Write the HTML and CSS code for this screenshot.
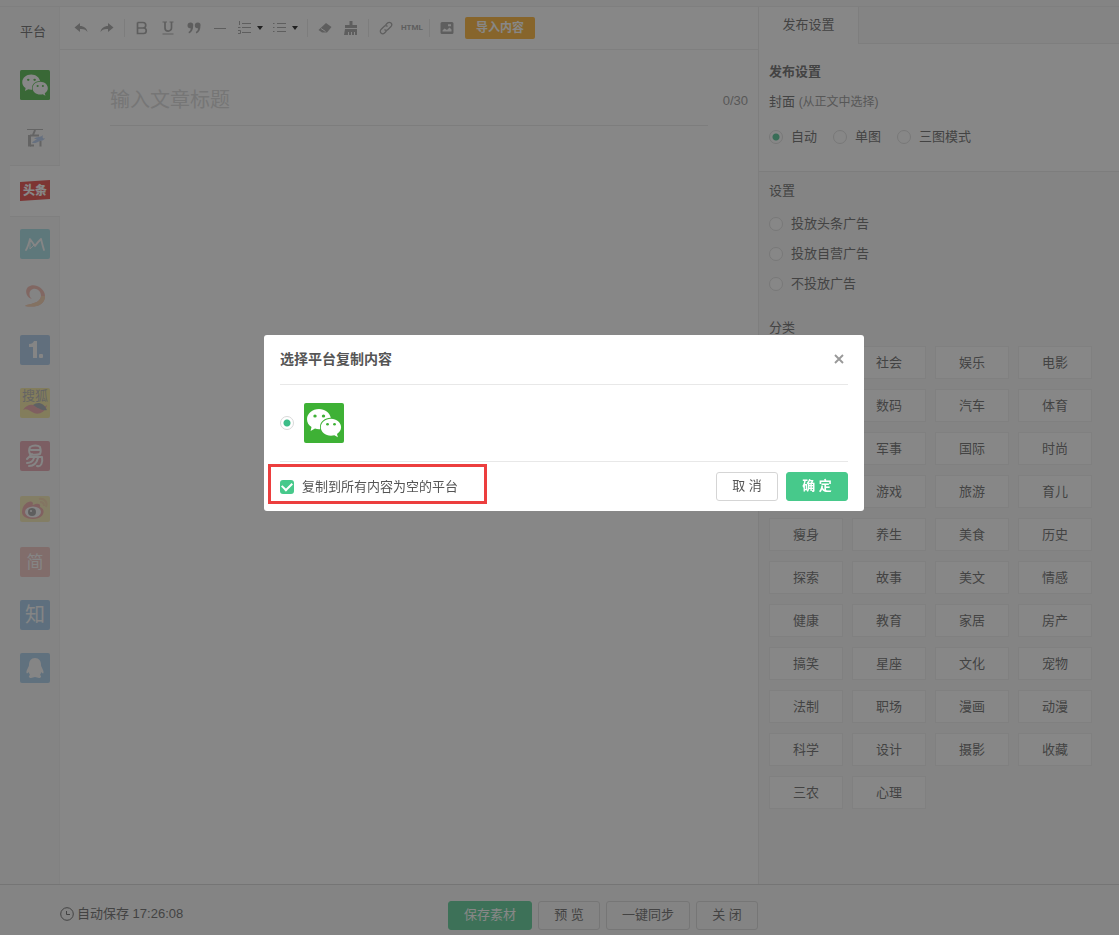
FILE: index.html
```html
<!DOCTYPE html>
<html lang="zh-CN">
<head>
<meta charset="utf-8">
<title>发布设置</title>
<link rel="stylesheet" href="styles.css">
</head>
<body>
<svg class="defs" width="0" height="0" aria-hidden="true">
  <symbol id="wechat" viewBox="0 0 40 40">
    <rect width="40" height="40" rx="2" fill="#3eb135"/>
    <path fill="#fff" d="M15 6C8.400 6 3 10.500 3 16.200c0 3.200 1.700 6 4.500 7.900L6.600 28l4.400-2.400c1.300.4 2.600.6 4 .6h1.200A9.500 9.500 0 0 1 16 24c0-5.200 4.900-9.300 10.800-9.200C25.800 9.800 20.900 6 15 6z"/>
    <path fill="#fff" d="M27 15.800c-5.700 0-10.200 3.800-10.200 8.500s4.500 8.500 10.200 8.500c1.200 0 2.400-.2 3.400-.5l3.500 1.900-.9-3.200c2.500-1.600 4.100-4 4.100-6.700 0-4.700-4.500-8.500-10.100-8.500z"/>
    <g fill="#3eb135"><ellipse cx="11" cy="13" rx="1.700" ry="1.500"/><ellipse cx="19.500" cy="13" rx="1.700" ry="1.500"/><ellipse cx="23.500" cy="21.300" rx="1.400" ry="1.200"/><ellipse cx="30.500" cy="21.300" rx="1.400" ry="1.200"/></g>
  </symbol>
</svg>

<div class="app">
  <div class="workspace">
    <nav class="platforms" aria-label="平台">
      <div class="platforms-title">平台</div>
      <button class="platform full" aria-label="微信"><svg viewBox="0 0 40 40"><use href="#wechat"/></svg></button>
      <button class="platform" aria-label="百家号"><svg viewBox="0 0 30 30"><path d="M7 6.500h16" stroke="#333"/><path d="M15 7l-2 5" stroke="#333" stroke-width="2"/><path d="M9.500 23.500V12" stroke="#333" stroke-width="3"/><path d="M10 12.500h9M10 22.500h4M20.500 18v5.500" fill="none" stroke="#333" stroke-width="2"/><path d="M12 20c2-3 3-2 5-4h-3c3-3 6-1 9-4-1 3 0 4 2 3-2 4-5 2-7 4-2 1-3 1-6 1z" fill="#3f7fe0"/></svg></button>
      <button class="platform active full" aria-label="头条"><svg viewBox="0 0 30 30"><path d="M0 6l30-2v19L0 25z" fill="#e5322f"/><text x="15" y="19" font-size="12" font-weight="900" text-anchor="middle" fill="#fff">头条</text></svg></button>
      <button class="platform" aria-label="美拍"><svg viewBox="0 0 30 30"><rect width="30" height="30" rx="2" fill="#12adc4"/><path d="M6 21c2-3 3-7 4-11l5 7c2-3 4-5 6-7 1 4 2 8 3 11" fill="none" stroke="#fff" stroke-width="1.800" stroke-linejoin="round" stroke-linecap="round"/><path d="M10 11v9l4-4" fill="none" stroke="#fff"/></svg></button>
      <button class="platform" aria-label="大鱼号"><svg viewBox="0 0 30 30"><path d="M8 5c3-2 6-2 9-1 5 2 8 6 8 10 0 9-9 12-20 10 2-2 5-1 9-3 4-1 7-4 7-7 0-5-4-8-8-7-4 1-5 7-1 10-5-1-8-8-4-12z" fill="#e8482a"/><path d="M5 24c2-2 5-1 9-3 4-1 7-4 7-7h4c0 9-9 12-20 10z" fill="#f28a2b"/></svg></button>
      <button class="platform" aria-label="一点号"><svg viewBox="0 0 30 30"><rect width="30" height="30" rx="2" fill="#2078cc"/><path fill="#fff" d="M9 9c3 0 4-1 5-3h3v17h-4V12H9z"/><rect x="19" y="19" width="4" height="4" rx="1" fill="#fff"/></svg></button>
      <button class="platform" aria-label="搜狐"><svg viewBox="0 0 30 30"><rect width="30" height="30" rx="2" fill="#f2cc00"/><text x="15" y="12" font-size="13" text-anchor="middle" fill="#333">搜狐</text><path d="M3 22c4-6 9-6 13-4s8 2 11-1c-2 8-9 10-13 8s-8-5-11-3z" fill="#d9161a"/><path d="M13 17c5-4 11-2 14 5-4 1-8-1-14-5z" fill="#123"/></svg></button>
      <button class="platform" aria-label="网易"><svg viewBox="0 0 30 30"><rect width="30" height="30" rx="2" fill="#c6102c"/><path d="M10 6c3-2 8-2 10 0 1 3 1 5 0 7-3 1-7 1-10 0-1-2-1-5 0-7zM11 9h8M12 13l-5 5M9 16h13c1 6-1 10-5 9M14 17c-1 3-4 5-7 5M18 17c-1 4-4 8-9 8" fill="none" stroke="#fff" stroke-width="2" stroke-linejoin="round" stroke-linecap="round"/></svg></button>
      <button class="platform" aria-label="微博"><svg viewBox="0 0 30 30"><rect y="2" width="30" height="26" rx="2" fill="#f6d23a"/><path d="M2 18C2 11 9 6 12 8c2 1 0 3 1 3 4-2 8-2 7 2 6 2 5 12-7 12-7 0-11-3-11-7z" fill="#e0201c"/><ellipse cx="13" cy="18" rx="8" ry="5.500" fill="#fff"/><circle cx="12" cy="18" r="4" fill="#111"/><circle cx="11" cy="17" r="1" fill="#fff"/><path d="M19 5c5-1 9 3 7 8M20 8c3 0 4 2 4 4" fill="none" stroke="#f29b27" stroke-width="2"/></svg></button>
      <button class="platform" aria-label="简书"><svg viewBox="0 0 30 30"><rect width="30" height="30" rx="2" fill="#e5685f"/><text x="15" y="21" font-size="17" text-anchor="middle" fill="#fff">简</text></svg></button>
      <button class="platform" aria-label="知乎"><svg viewBox="0 0 30 30"><rect width="30" height="30" rx="2" fill="#0f78d4"/><text x="15" y="22" font-size="20" text-anchor="middle" fill="#fff">知</text></svg></button>
      <button class="platform" aria-label="QQ"><svg viewBox="0 0 30 30"><rect width="30" height="30" rx="2" fill="#1a82d6"/><path d="M15 5c-4 0-6 3-6 7 0 2-3 5-2.500 8 .5 1 1.500 0 2-1l1.500 3c-2 1-1 3 1 3l4-1 4 1c2 0 3-2 1-3l1.500-3c.5 1 1.500 2 2 1C24 17 21 14 21 12c0-4-2-7-6-7z" fill="#fff"/></svg></button>
    </nav>

    <main class="editor">
      <div class="toolbar" role="toolbar">
        <button class="tool" aria-label="撤销"><svg viewBox="0 0 14 14"><path d="M6 2L.5 6.500 6 11V8c4-.3 6 1 7.500 3C13 7.500 10 5 6 5z" fill="currentColor"/></svg></button>
        <button class="tool" aria-label="重做"><svg viewBox="0 0 14 14"><path d="M8 2l5.500 4.500L8 11V8C4 7.700 2 9 .5 11 1 7.500 4 5 8 5z" fill="currentColor"/></svg></button>
        <span class="divider"></span>
        <button class="tool" aria-label="加粗"><svg viewBox="0 0 14 14"><path d="M2.500 1.500v11h6a2.700 2.700 0 0 0 0-5.500h-6M2.500 1.500h5.500a2.700 2.700 0 0 1 0 5.500" fill="none" stroke="currentColor" stroke-width="1.700"/></svg></button>
        <button class="tool" aria-label="下划线"><svg viewBox="0 0 14 14"><path d="M1.500 1h4.500M8.500 1h4" stroke="currentColor"/><path d="M4 1v6a3.200 3 0 0 0 6.500 0V1" fill="none" stroke="currentColor" stroke-width="1.700"/><path d="M1.500 13h11" stroke="currentColor"/></svg></button>
        <button class="tool" aria-label="引用"><svg viewBox="0 0 14 14"><path d="M3.500 1.500a2.500 2.500 0 0 1 2.700 3C6.200 8.500 5 11 2 12.500L1.500 11C3 10 3.700 9 3.700 7.200A2.800 2.800 0 0 1 .5 4.500a3 3 0 0 1 3-3zM10.800 1.500a2.500 2.500 0 0 1 2.700 3c0 4-1.200 6.500-4.200 8L8.800 11c1.500-1 2.200-2 2.200-3.800a2.800 2.800 0 0 1-3.200-2.700 3 3 0 0 1 3-3z" fill="currentColor"/></svg></button>
        <button class="tool" aria-label="分割线"><svg viewBox="0 0 14 14"><path d="M1 7.500h12" stroke="currentColor"/></svg></button>
        <button class="tool menu" aria-label="有序列表"><svg viewBox="0 0 14 14"><path d="M4 2.500h9M4 6.500h9M4 11.500h9M1.500 0v4M0 6.500h2.500M0 9.500h2.500v3H0" fill="none" stroke="currentColor"/></svg><i class="caret"></i></button>
        <button class="tool menu" aria-label="无序列表"><svg viewBox="0 0 14 14"><path d="M4 2.500h9M4 6.500h9M4 10.500h9M0 2.500h1.500M0 6.500h1.500M0 10.500h1.500" stroke="currentColor"/></svg><i class="caret"></i></button>
        <span class="divider"></span>
        <button class="tool" aria-label="清除格式"><svg viewBox="0 0 14 14"><path d="M8 2l5.500 4-4.500 5.500H4L.5 9z" fill="currentColor"/><path d="M3 7.500l4.500 3" stroke="#fff"/></svg></button>
        <button class="tool" aria-label="格式刷"><svg viewBox="0 0 14 14"><path d="M5.500 0h3v4H13v3H1V4h4.500zM1 8h12v6h-2v-3h-1v3H8v-3H7v3H5v-3H4v3H0z" fill="currentColor"/></svg></button>
        <span class="divider"></span>
        <button class="tool" aria-label="链接"><svg viewBox="0 0 14 14"><path d="M6.500 4l2-2a2.300 2.300 0 0 1 3.500 3.500l-3 3a2.300 2.300 0 0 1-3.500 0M7.500 10l-2 2A2.300 2.300 0 0 1 2 8.500l3-3a2.300 2.300 0 0 1 3.500 0" fill="none" stroke="currentColor" stroke-width="1.200"/></svg></button>
        <button class="tool html">HTML</button>
        <span class="divider"></span>
        <button class="tool" aria-label="图片"><svg viewBox="0 0 14 14"><path fill="currentColor" fill-rule="evenodd" d="M2 1h10q1.500 0 1.500 1.500v9q0 1.500-1.500 1.500H2q-1.500 0-1.500-1.500v-9Q.5 1 2 1zM2.500 10.500h9V8.500L9.500 6.500 7 9 4.500 7.500l-2 2zM8 3.200v2h3v-2z"/></svg></button>
        <button class="import">导入内容</button>
      </div>
      <div class="title-row">
        <input class="title-input" type="text" placeholder="输入文章标题" aria-label="文章标题">
        <span class="counter">0/30</span>
      </div>
    </main>

    <aside class="settings">
      <div class="tabs"><button class="tab">发布设置</button></div>
      <section class="cover">
        <h2>发布设置</h2>
        <p>封面 <small>(从正文中选择)</small></p>
        <div class="radio-row">
          <label><input type="radio" name="cover" checked>自动</label>
          <label><input type="radio" name="cover">单图</label>
          <label><input type="radio" name="cover">三图模式</label>
        </div>
      </section>
      <section class="options">
        <h3>设置</h3>
        <div class="radio-list">
          <label><input type="radio" name="ad">投放头条广告</label>
          <label><input type="radio" name="ad">投放自营广告</label>
          <label><input type="radio" name="ad">不投放广告</label>
        </div>
        <h3>分类</h3>
        <div class="categories">
          <button class="second">社会</button><button>娱乐</button><button>电影</button>
          <button class="second">数码</button><button>汽车</button><button>体育</button>
          <button class="second">军事</button><button>国际</button><button>时尚</button>
          <button class="second">游戏</button><button>旅游</button><button>育儿</button>
          <button>瘦身</button><button>养生</button><button>美食</button><button>历史</button>
          <button>探索</button><button>故事</button><button>美文</button><button>情感</button>
          <button>健康</button><button>教育</button><button>家居</button><button>房产</button>
          <button>搞笑</button><button>星座</button><button>文化</button><button>宠物</button>
          <button>法制</button><button>职场</button><button>漫画</button><button>动漫</button>
          <button>科学</button><button>设计</button><button>摄影</button><button>收藏</button>
          <button>三农</button><button>心理</button>
        </div>
      </section>
    </aside>
  </div>

  <footer class="footer">
    <div class="footer-inner">
      <div class="autosave"><svg viewBox="0 0 14 14"><circle cx="7" cy="7" r="6.300" fill="none" stroke="currentColor"/><path d="M6.500 4v3.500H10" fill="none" stroke="currentColor"/></svg>自动保存 17:26:08</div>
      <div class="actions">
        <button class="btn primary wide">保存素材</button>
        <button class="btn">预 览</button>
        <button class="btn wide">一键同步</button>
        <button class="btn">关 闭</button>
      </div>
    </div>
  </footer>
</div>

<div class="overlay">
  <div class="modal" role="dialog" aria-labelledby="dialog-title">
    <header class="modal-header">
      <h1 id="dialog-title">选择平台复制内容</h1>
      <button class="close" aria-label="关闭"><svg viewBox="0 0 10 10"><path d="M1 1l8 8M9 1L1 9" stroke="currentColor" stroke-width="1.900"/></svg></button>
    </header>
    <div class="modal-body">
      <label class="choice"><input type="radio" name="source" aria-label="微信" checked><svg viewBox="0 0 40 40"><use href="#wechat"/></svg></label>
    </div>
    <div class="modal-footer">
      <label class="copy-all"><input type="checkbox" checked>复制到所有内容为空的平台</label>
      <div class="modal-actions">
        <button class="btn">取 消</button>
        <button class="btn primary">确 定</button>
      </div>
      <span class="highlight"></span>
    </div>
  </div>
</div>
</body>
</html>
```
FILE: styles.css
```css
* { box-sizing: border-box; }
body {
  margin: 0;
  color: #555;
  background: #f7f7f7;
  font: 13px/20px "Liberation Sans", "Noto Sans CJK SC", sans-serif;
}
button, input { margin: 0; padding: 0; border: 0; background: none; color: inherit; font: inherit; }
h1, h2, h3, p { margin: 0; font-size: 13px; font-weight: normal; }
svg { display: block; }
.defs { position: absolute; }

.app { display: flex; flex-direction: column; min-height: 100vh; padding-top: 6px; }
.workspace {
  flex: 1;
  display: grid;
  grid-template-columns: 50px minmax(0, 1fr) 361px;
  padding-left: 10px;
  border-top: 1px solid #ebebeb;
}

.platforms { display: flex; flex-direction: column; gap: 1px; border-right: 1px solid #f0f0f0; }
.platforms-title { height: 51px; padding: 15px 0 0 10px; }
.platform { display: flex; align-items: center; height: 52px; padding-left: 10px; }
.platform svg { width: 30px; height: 30px; opacity: .4; }
.platform.full svg { opacity: 1; }
.platform.active { margin-right: -1px; background: #fff; border-top: 1px solid #ebebeb; border-bottom: 1px solid #ebebeb; }

.editor { background: #fff; }
.toolbar { display: flex; align-items: center; height: 43px; padding-left: 8px; border-bottom: 1px solid #ebebeb; color: #999; }
.tool { flex: none; display: flex; align-items: center; justify-content: center; width: 26px; height: 26px; }
.tool svg { width: 14px; height: 14px; }
.tool.menu { width: 35px; gap: 5px; }
.caret { border: 3px solid transparent; border-top: 4px solid #000; border-bottom: 0; }
.tool.html { font-family: Roboto, sans-serif; font-size: 8px; font-weight: bold; }
.divider { flex: none; width: 1px; height: 18px; margin: 0 4px; background: #e5e5e5; }
.import { flex: none; width: 70px; height: 22px; margin-left: 5px; border-radius: 2px; background: #ffab1a; color: #fff; font-size: 12px; font-weight: bold; line-height: 20px; }
.title-row { display: flex; align-items: center; padding: 25px 10px 0 50px; }
.title-input { flex: 1; min-width: 0; height: 51px; border-bottom: 1px solid #e5e5e5; font-size: 20px; }
.title-input::placeholder { color: #d4d4d4; opacity: 1; }
.counter { width: 40px; text-align: right; color: #888; }

.settings { display: flex; flex-direction: column; border-left: 1px solid #e8e8e8; }
.tabs { display: flex; height: 37px; border-bottom: 1px solid #e8e8e8; }
.tab { width: 100px; height: 37px; padding-bottom: 1px; background: #fff; border-right: 1px solid #e8e8e8; }
.cover { padding: 18px 10px 24px; background: #fff; border-bottom: 1px solid #e5e5e5; }
.cover h2 { font-weight: bold; }
.cover p { margin-top: 10px; }
.cover small { font-size: 12px; color: #888; }
.radio-row { display: flex; gap: 16px; margin-top: 15px; }
label { display: flex; align-items: center; gap: 8px; }
input[type="radio"] {
  appearance: none;
  flex: none;
  width: 14px;
  height: 14px;
  border: 1px solid #d9d9d9;
  border-radius: 50%;
  background: #fff;
}
input[type="radio"]:checked { background: radial-gradient(circle, #3dbd88 0 3px, #fff 4px); }
.options { flex: 1; padding: 9px 10px 74px; }
.radio-list { display: flex; flex-direction: column; gap: 10px; margin: 13px 0 24px; }
.categories { display: grid; grid-template-columns: repeat(4, 74px); gap: 10px 9px; margin-top: 8px; }
.categories button { height: 33px; border: 1px solid #ededed; background: #fff; }
.categories .second { grid-column: 2; }

.footer {
  display: grid;
  grid-template-columns: minmax(0, 1fr) 361px;
  height: 51px;
  padding-left: 60px;
  border-top: 1px solid #d2d2d2;
}
.footer-inner { display: flex; justify-content: space-between; padding-top: 16px; }
.autosave { display: flex; align-items: center; gap: 3px; height: 26px; }
.autosave svg { width: 14px; height: 14px; }
.actions { display: flex; gap: 6px; }
.btn { width: 62px; height: 29px; padding-bottom: 1px; border: 1px solid #d5d5d5; border-radius: 3px; }
.btn.wide { width: 84px; }
.btn.primary { border-color: #47c98b; background: #47c98b; color: #fff; font-weight: bold; }
.actions .primary { font-weight: normal; }

.overlay {
  position: fixed;
  inset: 0;
  display: flex;
  justify-content: center;
  align-items: flex-start;
  padding: 335px 0 0 9px;
  background: rgba(55, 55, 55, .6);
}
.modal { width: 600px; max-width: 100%; padding: 0 16px; border-radius: 3px; background: #fff; }
.modal-header { display: flex; align-items: center; justify-content: space-between; height: 50px; padding-bottom: 2px; border-bottom: 1px solid #e8e8e8; }
.modal-header h1 { font-size: 14px; font-weight: bold; }
.close { width: 18px; height: 18px; padding: 0 4px; color: #999; }
.modal-body { padding: 18px 0; border-bottom: 1px solid #e8e8e8; }
.choice { width: max-content; gap: 10px; }
.choice svg { width: 40px; height: 40px; }
.modal-footer { position: relative; display: flex; align-items: center; justify-content: space-between; height: 49px; }
.copy-all input {
  appearance: none;
  display: grid;
  place-items: center;
  width: 14px;
  height: 14px;
  border-radius: 3px;
  background: #47c98b;
}
.copy-all input::after { content: ""; width: 8px; height: 5px; border: solid #fff; border-width: 0 0 2px 2px; transform: translateY(-1px) rotate(-45deg); }
.modal-actions { display: flex; gap: 8px; }
.highlight { position: absolute; top: 2px; left: -12px; width: 219px; height: 40px; border: 3px solid #ec3e3e; pointer-events: none; }
```
